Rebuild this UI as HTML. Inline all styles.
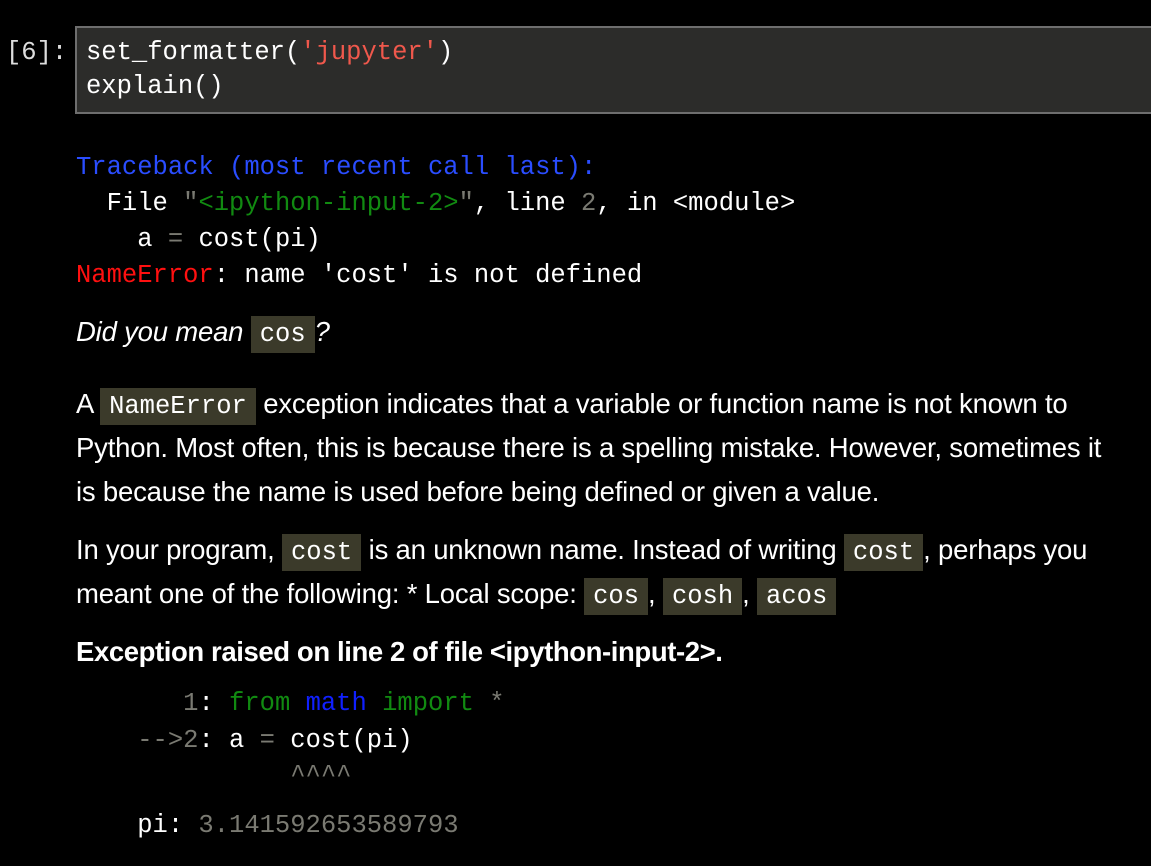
<!DOCTYPE html>
<html><head><meta charset="utf-8"><style>
html,body{margin:0;padding:0;background:#000;}
body{width:1151px;height:866px;position:relative;overflow:hidden;color:#fff;}
.m{font-family:"Liberation Mono",monospace;font-size:25.5px;line-height:36px;white-space:pre;position:absolute;}
.s{font-family:"Liberation Sans",sans-serif;font-size:27.5px;line-height:44px;white-space:nowrap;position:absolute;left:76px;letter-spacing:-0.2px;}
.box{position:absolute;left:75px;top:26px;width:1080px;height:88px;background:#2c2c2a;border:2px solid #6e6e6e;box-sizing:border-box;}
.h{background:#3b3a2a;font-family:"Liberation Mono",monospace;font-size:25.5px;padding:4px 9px;color:#fff;letter-spacing:0;}
.b{color:#2a4dff}.g{color:#118a11}.r{color:#ff1010}.gr{color:#7a7a72}.str{color:#f0584c}.bl{color:#1020ff}
</style></head><body>
<div class="m" style="left:6px;top:35px;color:#ddd">[6]:</div>
<div class="box"></div>
<div class="m" style="left:86px;top:35px">set_formatter(<span class="str">'jupyter'</span>)</div>
<div class="m" style="left:86px;top:69px">explain()</div>

<div class="m b" style="left:76px;top:150px">Traceback (most recent call last):</div>
<div class="m" style="left:76px;top:186px">  File <span class="gr">"</span><span class="g">&lt;ipython-input-2&gt;</span><span class="gr">"</span>, line <span class="gr">2</span>, in &lt;module&gt;</div>
<div class="m" style="left:76px;top:222px">    a <span class="gr">=</span> cost(pi)</div>
<div class="m" style="left:76px;top:258px"><span class="r">NameError</span>: name 'cost' is not defined</div>

<div class="s" style="top:310px;font-style:italic">Did you mean <span class="h" style="font-style:normal">cos</span>?</div>

<div class="s" style="top:382px">A <span class="h">NameError</span> exception indicates that a variable or function name is not known to</div>
<div class="s" style="top:426px">Python. Most often, this is because there is a spelling mistake. However, sometimes it</div>
<div class="s" style="top:470px">is because the name is used before being defined or given a value.</div>

<div class="s" style="top:528px">In your program, <span class="h">cost</span> is an unknown name. Instead of writing <span class="h">cost</span>, perhaps you</div>
<div class="s" style="top:572px">meant one of the following: * Local scope: <span class="h">cos</span>, <span class="h">cosh</span>, <span class="h">acos</span></div>

<div class="s" style="top:630px;font-weight:bold;letter-spacing:-0.4px">Exception raised on line 2 of file &lt;ipython-input-2&gt;.</div>

<div class="m" style="left:76px;top:686px">       <span class="gr">1</span>: <span class="g">from</span> <span class="bl">math</span> <span class="g">import</span> <span class="gr">*</span></div>
<div class="m" style="left:76px;top:723px">    <span class="gr">--&gt;2</span>: a <span class="gr">=</span> cost(pi)</div>
<div class="m gr" style="left:76px;top:758px">              ^^^^</div>
<div class="m" style="left:76px;top:808px">    pi: <span class="gr">3.141592653589793</span></div>
</body></html>
